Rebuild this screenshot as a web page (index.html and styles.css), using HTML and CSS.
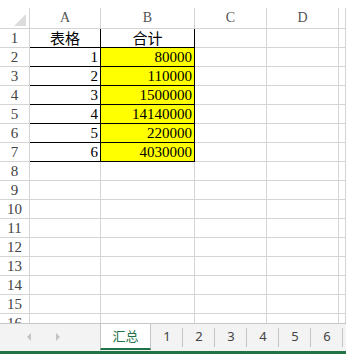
FILE: index.html
```html
<!DOCTYPE html>
<html lang="zh-CN">
<head>
    <meta charset="UTF-8">
    <meta name="viewport" content="width=device-width, initial-scale=1.0">
    <title>汇总</title>
    <link rel="stylesheet" href="styles.css">
</head>
<body>
    <div class="book">
        <div class="sheet">
            <div class="row head">
                <div class="corner">
                    <svg width="29" height="20" viewBox="0 0 29 20"><polygon points="26,6 26,18 14,18" fill="#dcdcdc"/></svg>
                </div>
                <div class="col">A</div>
                <div class="col">B</div>
                <div class="col">C</div>
                <div class="col">D</div>
                <div class="col"></div>
            </div>
            <div class="row">
                <div class="num">1</div>
                <div class="cell box cjk">表格</div>
                <div class="cell box cjk">合计</div>
                <div class="cell"></div><div class="cell"></div><div class="cell"></div>
            </div>
            <div class="row">
                <div class="num">2</div>
                <div class="cell box">1</div>
                <div class="cell box fill">80000</div>
                <div class="cell"></div><div class="cell"></div><div class="cell"></div>
            </div>
            <div class="row">
                <div class="num">3</div>
                <div class="cell box">2</div>
                <div class="cell box fill">110000</div>
                <div class="cell"></div><div class="cell"></div><div class="cell"></div>
            </div>
            <div class="row">
                <div class="num">4</div>
                <div class="cell box">3</div>
                <div class="cell box fill">1500000</div>
                <div class="cell"></div><div class="cell"></div><div class="cell"></div>
            </div>
            <div class="row">
                <div class="num">5</div>
                <div class="cell box">4</div>
                <div class="cell box fill">14140000</div>
                <div class="cell"></div><div class="cell"></div><div class="cell"></div>
            </div>
            <div class="row">
                <div class="num">6</div>
                <div class="cell box">5</div>
                <div class="cell box fill">220000</div>
                <div class="cell"></div><div class="cell"></div><div class="cell"></div>
            </div>
            <div class="row">
                <div class="num">7</div>
                <div class="cell box">6</div>
                <div class="cell box fill">4030000</div>
                <div class="cell"></div><div class="cell"></div><div class="cell"></div>
            </div>
            <div class="row"><div class="num">8</div><div class="cell"></div><div class="cell"></div><div class="cell"></div><div class="cell"></div><div class="cell"></div></div>
            <div class="row"><div class="num">9</div><div class="cell"></div><div class="cell"></div><div class="cell"></div><div class="cell"></div><div class="cell"></div></div>
            <div class="row"><div class="num">10</div><div class="cell"></div><div class="cell"></div><div class="cell"></div><div class="cell"></div><div class="cell"></div></div>
            <div class="row"><div class="num">11</div><div class="cell"></div><div class="cell"></div><div class="cell"></div><div class="cell"></div><div class="cell"></div></div>
            <div class="row"><div class="num">12</div><div class="cell"></div><div class="cell"></div><div class="cell"></div><div class="cell"></div><div class="cell"></div></div>
            <div class="row"><div class="num">13</div><div class="cell"></div><div class="cell"></div><div class="cell"></div><div class="cell"></div><div class="cell"></div></div>
            <div class="row"><div class="num">14</div><div class="cell"></div><div class="cell"></div><div class="cell"></div><div class="cell"></div><div class="cell"></div></div>
            <div class="row"><div class="num">15</div><div class="cell"></div><div class="cell"></div><div class="cell"></div><div class="cell"></div><div class="cell"></div></div>
            <div class="row"><div class="num">16</div><div class="cell"></div><div class="cell"></div><div class="cell"></div><div class="cell"></div><div class="cell"></div></div>
        </div>

        <div class="tabs">
            <div class="nav">
                <svg width="100" height="26" viewBox="0 0 100 26"><polygon points="31,9 31,17 27,13" fill="#c3c3c3"/><polygon points="56,9 56,17 60,13" fill="#c3c3c3"/></svg>
            </div>
            <div class="tab active">汇总</div>
            <div class="tab">1</div>
            <div class="tab">2</div>
            <div class="tab">3</div>
            <div class="tab">4</div>
            <div class="tab">5</div>
            <div class="tab">6</div>
        </div>
        <div class="status"></div>
    </div>
</body>
</html>
```

FILE: styles.css
```css
* {
    box-sizing: border-box;
}
body {
    margin: 0;
    background: #fff;
}
.book {
    width: 346px;
    height: 354px;
    display: flex;
    flex-direction: column;
    overflow: hidden;
}
.sheet {
    height: 323px;
    padding-top: 8px;
    overflow: hidden;
    font-family: "Liberation Serif", "Noto Sans CJK SC", serif;
    font-size: 15px;
}
.row {
    display: grid;
    grid-template-columns: 30px 71px 94px 72px 72px 1fr;
    height: 19px;
}
.row > div {
    border-right: 1px solid #d4d4d4;
    border-bottom: 1px solid #d4d4d4;
    line-height: 18px;
    white-space: nowrap;
    overflow: hidden;
}
.head {
    height: 21px;
}
.head > div {
    line-height: 20px;
    text-align: center;
    color: #555;
    font-size: 14px;
}
.corner svg {
    display: block;
}
.num {
    text-align: center;
    color: #444;
}
.cell {
    text-align: right;
    padding: 0 2px;
    color: #000;
}
.row > .box {
    border-right-color: #000;
    border-bottom-color: #000;
}
.row > .cjk {
    text-align: center;
    font-family: "Noto Sans CJK SC", sans-serif;
    font-size: 15px;
    line-height: 17px;
    overflow: visible;
}
.fill {
    background: #ffff00;
}

.tabs {
    height: 28px;
    border-top: 1px solid #c6c6c6;
    background: #f3f3f3;
    display: flex;
    align-items: flex-start;
    font-family: "Noto Sans", "Noto Sans CJK SC", sans-serif;
    font-size: 13px;
    color: #444;
}
.nav {
    width: 100px;
    height: 26px;
}
.nav svg {
    display: block;
}
.tab {
    position: relative;
    width: 32px;
    height: 26px;
    line-height: 25px;
    text-align: center;
}
.tab::after {
    content: "";
    position: absolute;
    right: 0;
    top: 4px;
    height: 19px;
    border-right: 1px solid #c6c6c6;
}
.tab.active {
    width: 51px;
    background: #fff;
    color: #217346;
    border-left: 1px solid #c6c6c6;
    border-right: 1px solid #c6c6c6;
    border-bottom: 2px solid #217346;
    font-family: "Noto Sans CJK SC", sans-serif;
    line-height: 23px;
}
.tab.active::after {
    display: none;
}
.status {
    height: 3px;
    background: #217346;
}
```
